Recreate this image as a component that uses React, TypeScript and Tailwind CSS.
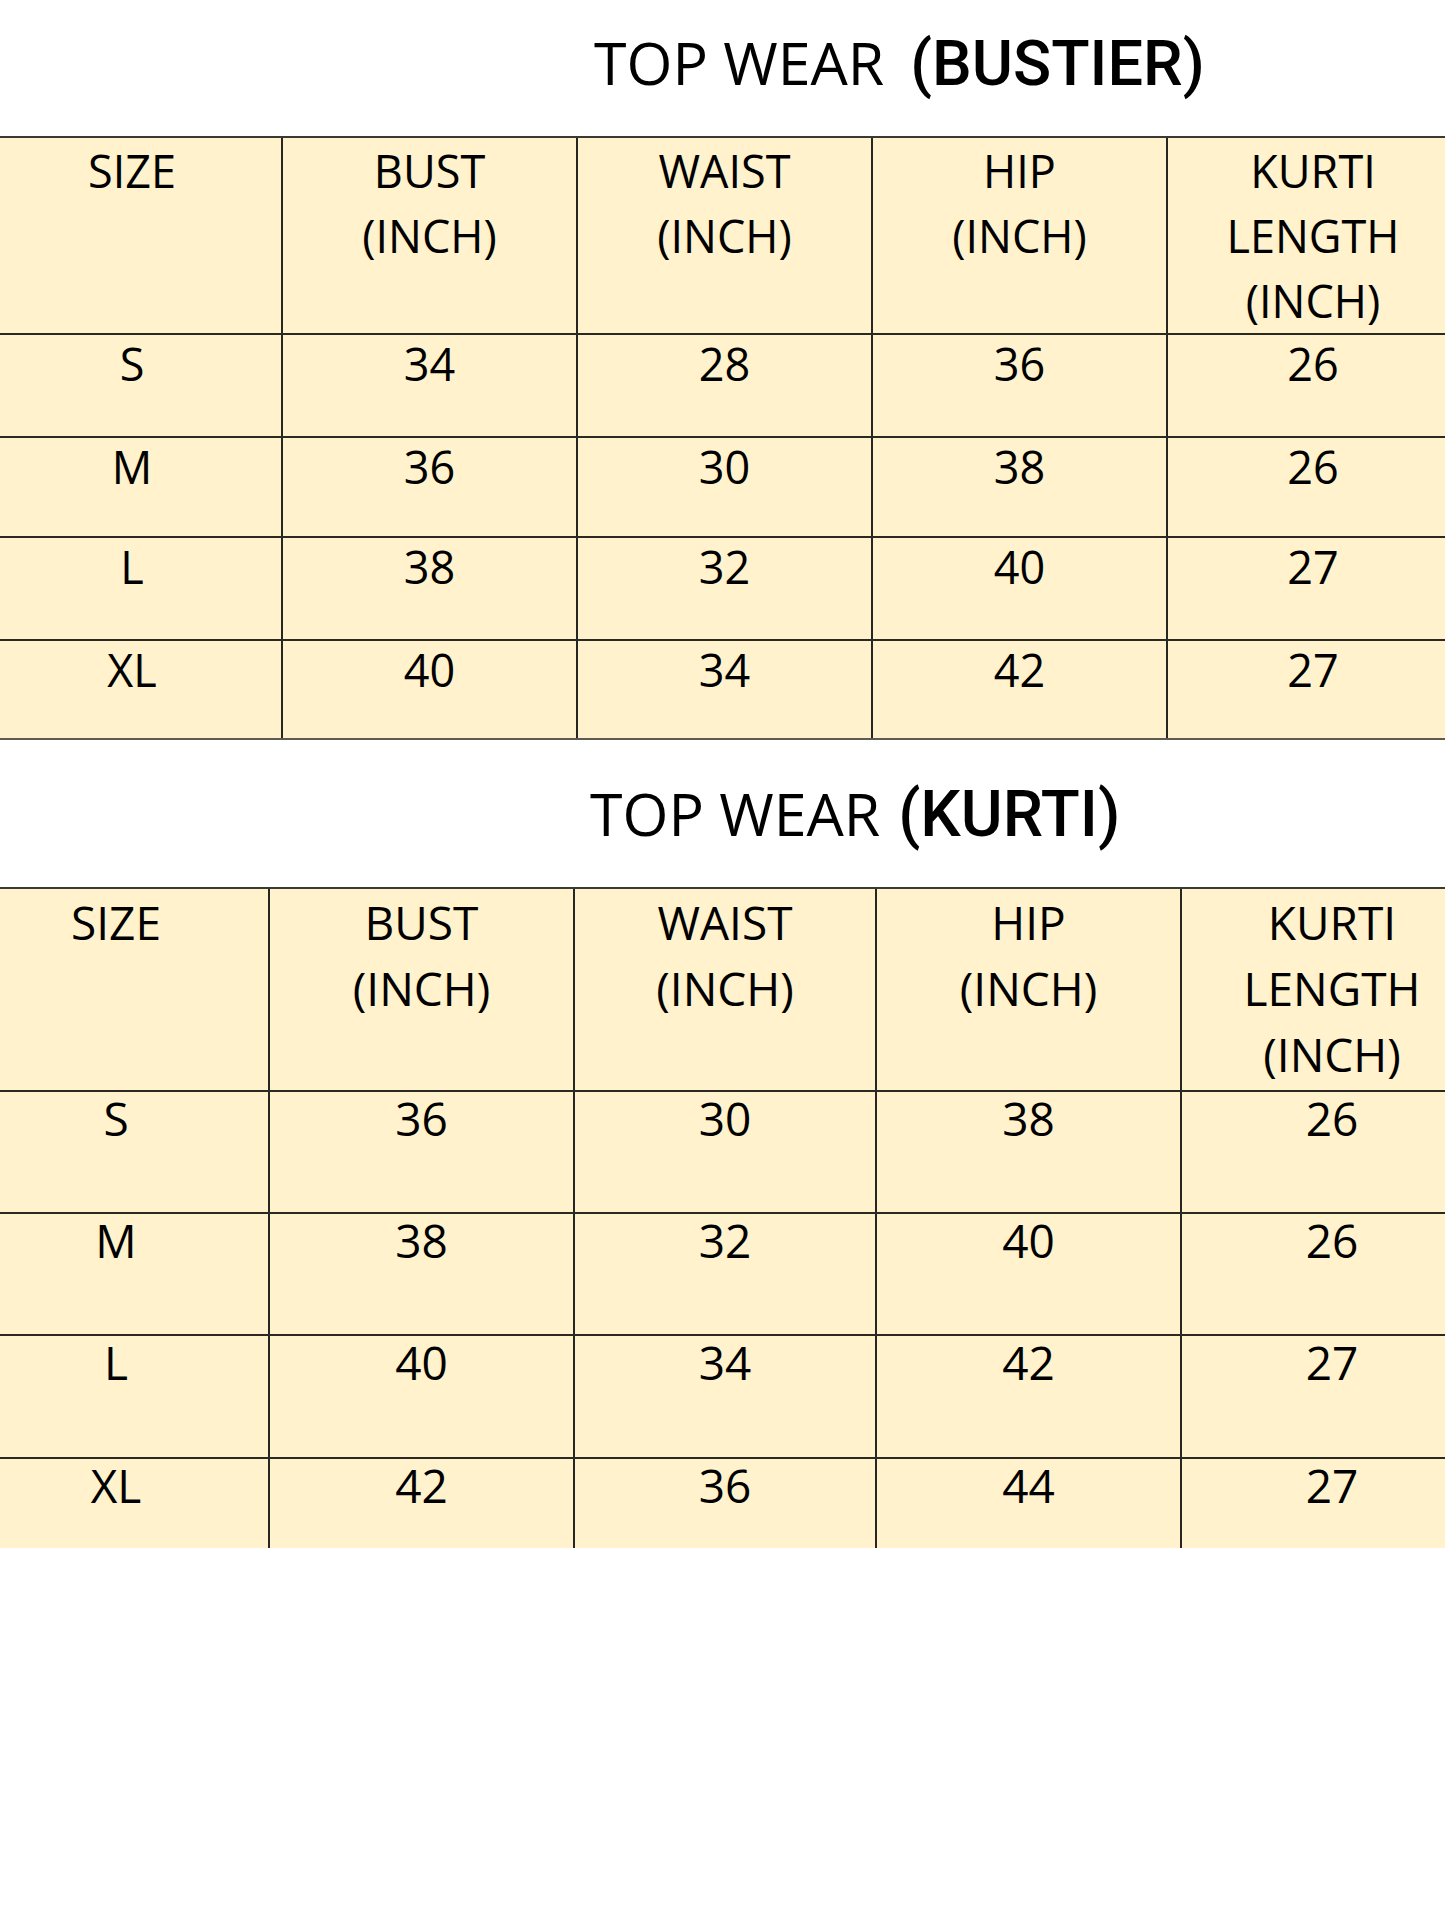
import React from "react";

const OPEN = { fontFamily: '"Open Sans", "Noto Sans", sans-serif' } as const;
const ROBOTO = { fontFamily: 'Roboto, "Noto Sans", sans-serif' } as const;

type TableSpec = {
  cols: string;
  firstPad: string;
  lastPad: string;
  headerH: string;
  rowHs: string[];
  headerLead: string;
  dataLead: string;
  text: string;
  rows: string[][];
  bottomBorder: boolean;
};

const headers = [["SIZE"], ["BUST", "(INCH)"], ["WAIST", "(INCH)"], ["HIP", "(INCH)"], ["KURTI", "LENGTH", "(INCH)"]];

function Table({ spec }: { spec: TableSpec }) {
  const cellCls = (i: number) =>
    [
      "flex flex-col items-center text-black",
      i === 0 ? spec.firstPad : "border-l-2 border-[#262622]",
      i === 4 ? spec.lastPad : "",
    ].join(" ");
  return (
    <div className="w-full bg-[#FFF2CC]" style={OPEN}>
      <div className={`grid ${spec.cols} ${spec.headerH} border-t-2 border-[#3a3933]`}>
        {headers.map((h, i) => (
          <div key={i} className={`${cellCls(i)} ${spec.headerLead} ${spec.text}`}>
            {h.map((l) => (
              <span key={l}>{l}</span>
            ))}
          </div>
        ))}
      </div>
      {spec.rows.map((r, ri) => (
        <div key={ri} className={`grid ${spec.cols} ${spec.rowHs[ri]} border-t-2 border-[#2a2922]`}>
          {r.map((v, i) => (
            <div key={i} className={`${cellCls(i)} ${spec.dataLead} ${spec.text}`}>
              <span>{v}</span>
            </div>
          ))}
        </div>
      ))}
      {spec.bottomBorder && <div className="h-[2px] bg-[#5f5b50]" />}
    </div>
  );
}

export default function App() {
  const t1: TableSpec = {
    cols: "grid-cols-[281px_295px_295px_295px_1fr]",
    firstPad: "pr-[17px]",
    lastPad: "pl-[13px]",
    headerH: "h-[197px]",
    rowHs: ["h-[103px]", "h-[100px]", "h-[103px]", "h-[99px]"],
    headerLead: "leading-[65px]",
    dataLead: "leading-[58px]",
    text: "text-[45px]",
    rows: [
      ["S", "34", "28", "36", "26"],
      ["M", "36", "30", "38", "26"],
      ["L", "38", "32", "40", "27"],
      ["XL", "40", "34", "42", "27"],
    ],
    bottomBorder: true,
  };
  const t2: TableSpec = {
    cols: "grid-cols-[268px_305px_302px_305px_1fr]",
    firstPad: "pr-[36px]",
    lastPad: "pl-[37px]",
    headerH: "h-[203px]",
    rowHs: ["h-[122px]", "h-[122px]", "h-[123px]", "h-[91px]"],
    headerLead: "leading-[66px]",
    dataLead: "leading-[52px]",
    text: "text-[46px]",
    rows: [
      ["S", "36", "30", "38", "26"],
      ["M", "38", "32", "40", "26"],
      ["L", "40", "34", "42", "27"],
      ["XL", "42", "36", "44", "27"],
    ],
    bottomBorder: false,
  };
  return (
    <div className="w-[1445px] h-[1927px] overflow-hidden bg-white">
      <div className="h-[136px] pt-[32px] pl-[594px] text-[59px] leading-[60px] text-black whitespace-nowrap">
        <span style={OPEN}>TOP WEAR</span>
        <span style={ROBOTO} className="ml-[26px] font-medium text-[63px]">(BUSTIER)</span>
      </div>
      <Table spec={t1} />
      <div className="h-[147px] pt-[43px] pl-[590px] text-[59px] leading-[60px] text-black whitespace-nowrap">
        <span style={OPEN}>TOP WEAR</span>
        <span style={ROBOTO} className="ml-[18px] font-medium text-[64px]">(KURTI)</span>
      </div>
      <Table spec={t2} />
    </div>
  );
}
